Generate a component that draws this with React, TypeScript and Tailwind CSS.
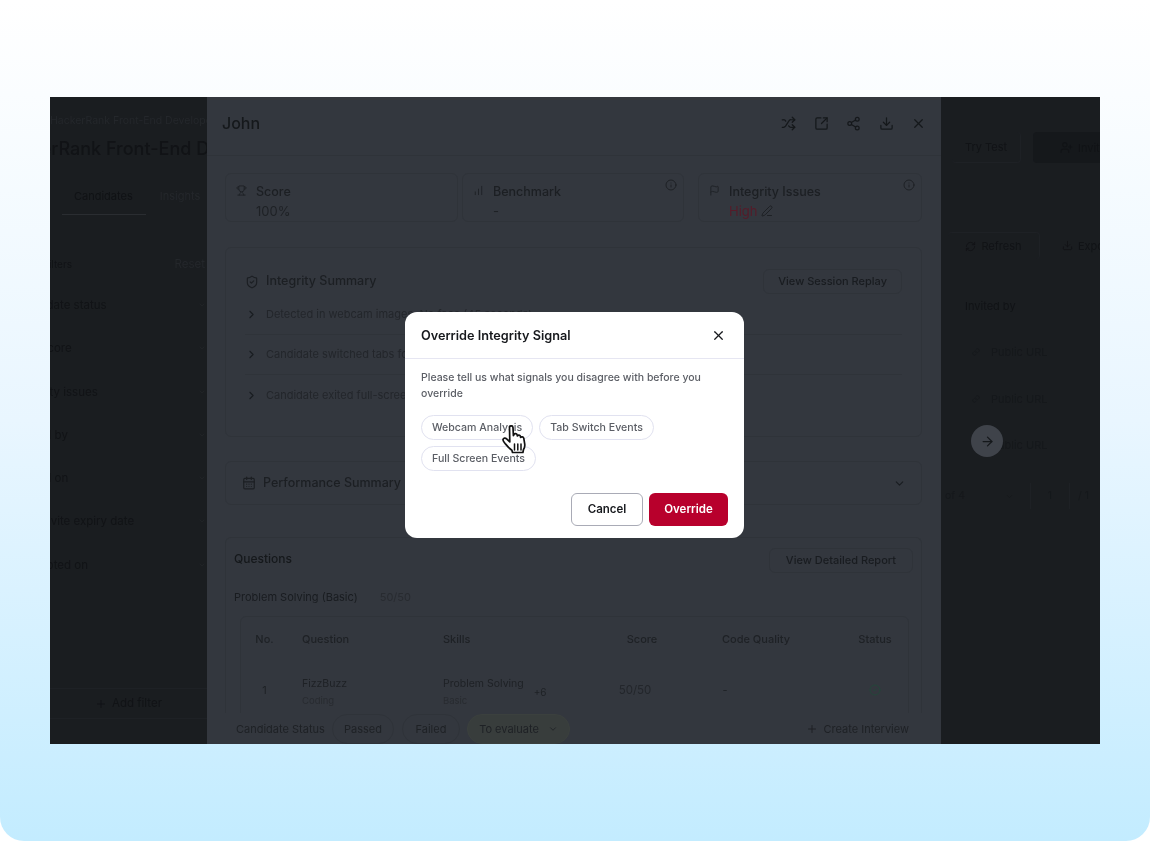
import {
  ArrowRight,
  CalendarDays,
  ChartNoAxesColumnIncreasing,
  ChevronDown,
  ChevronRight,
  CircleCheck,
  Download,
  Flag,
  Info,
  Link,
  PenLine,
  Plus,
  RefreshCw,
  Share2,
  ShieldCheck,
  Shuffle,
  SquareArrowOutUpRight,
  Trophy,
  UserPlus,
  X,
} from 'lucide-react';

const filters = [
  'Candidate status',
  'Test score',
  'Integrity issues',
  'Invited by',
  'Invited on',
  'Test invite expiry date',
  'Attempted on',
];

const issues = [
  'Detected in webcam images: No face (45 seconds)',
  'Candidate switched tabs for 2 minutes during test',
  'Candidate exited full-screen mode 3 times',
];

const tableCols = 'grid grid-cols-[61px_141px_170px_58px_170px_68px] text-center';

function LeftColumn() {
  return (
    <div className="w-[157px] shrink-0 overflow-hidden flex flex-col bg-[#1a1d20] text-[#111316]">
      <p className="mt-[17px] text-[10.5px] leading-[14px] text-[#24272b] whitespace-nowrap">HackerRank Front-End Developer</p>
      <p className="mt-[6px] -ml-[53px] text-[18px] leading-[30px] font-medium whitespace-nowrap">HackerRank Front-End Developer</p>
      <div className="mt-[23px] flex pl-[24px] gap-[27px] text-[11px] leading-[18px] text-[#101215]">
        <span className="relative whitespace-nowrap">
          Candidates
          <span className="absolute left-[-12px] right-[-13px] top-[27px] h-[1px] bg-[#2a2d31]" />
        </span>
        <span className="text-[#24272b]">Insights</span>
      </div>
      <div className="mt-[50px] flex justify-between pr-[2px] text-[11.5px] leading-[18px]">
        <span className="-ml-[7px] text-[10px]">Filters</span>
        <span className="text-[#24272b]">Reset</span>
      </div>
      <div className="mt-[23px] -ml-[35px] flex flex-col gap-[25.3px] text-[11.5px] leading-[18px] text-[#111316]">
        {filters.map((f) => (
          <div key={f} className="flex justify-between items-center pr-[1px] whitespace-nowrap">
            <span>{f}</span>
            <ChevronDown size={8} className="text-[#24272b]" />
          </div>
        ))}
      </div>
      <div className="mt-auto mb-[25px] border-y border-[#1e2125] h-[31px] flex items-center justify-center gap-[5px] text-[11.5px] text-[#111316]">
        <Plus size={12} />
        <span>Add filter</span>
      </div>
    </div>
  );
}

function RightColumn() {
  return (
    <div className="w-[159px] shrink-0 overflow-hidden flex flex-col bg-[#1a1d20] text-[#111316] text-[11px] leading-[18px]">
      <div className="mt-[35px] flex items-center pl-[11px] w-[220px]">
        <div className="h-[31px] w-[69px] border-b border-r border-[#1e2125] rounded flex items-center justify-center">Try Test</div>
        <div className="ml-[12px] h-[31px] w-[100px] bg-[#15181b] rounded flex items-center justify-center gap-[5px]">
          <UserPlus size={13} />
          Invite
        </div>
      </div>
      <div className="mt-[69px] flex items-center w-[220px] pl-[7px]">
        <div className="h-[27px] w-[92px] border-r border-t border-[#1e2125] rounded flex items-center justify-center gap-[5px]">
          <RefreshCw size={11} />
          Refresh
        </div>
        <div className="ml-[22px] flex items-center gap-[5px]">
          <Download size={11} />
          Export
        </div>
      </div>
      <p className="mt-[38px] pl-[24px]">Invited by</p>
      <div className="mt-[28px] flex flex-col gap-[28.5px] pl-[31px]">
        {[0, 1, 2].map((i) => (
          <div key={i} className="flex items-center gap-[11px] text-[#15181b]">
            <Link size={8} />
            <span>Public URL</span>
          </div>
        ))}
      </div>
      <div className="mt-[29px] flex items-center pl-[4px] text-[10.5px] text-[#15181b] whitespace-nowrap">
        <span>of 4</span>
        <ChevronDown size={9} className="ml-[40px]" />
        <span className="ml-[16px] h-[26px] w-[40px] border-x border-[#1e2125] flex items-center justify-center">1</span>
        <span className="ml-[8px]">/ 1</span>
      </div>
    </div>
  );
}

function StatCard({ icon, title, value, info, className }: { icon: React.ReactNode; title: string; value: React.ReactNode; info?: boolean; className: string }) {
  return (
    <div className={`relative h-[49px] border border-[#2f3339] rounded-md flex gap-[9px] pt-[8px] ${className}`}>
      <span className="pt-[3px] text-[#1e2125]">{icon}</span>
      <div>
        <p className="text-[12.5px] leading-[19px] font-medium text-[#1c1f23]">{title}</p>
        <div className="text-[13px] leading-[20px] text-[#1e2125]">{value}</div>
      </div>
      {info && <Info size={12} className="absolute right-[6px] top-[5px] text-[#1e2125]" />}
    </div>
  );
}

function DetailPanel() {
  return (
    <div className="w-[734px] shrink-0 flex flex-col bg-[#33373e] overflow-hidden">
      <div className="h-[59px] shrink-0 flex items-center justify-between pl-[15px] pr-[15px] pb-[6px] border-b border-[#2f3339]">
        <span className="text-[16px] font-medium text-[#15181b]">John</span>
        <div className="flex items-center gap-[17.5px] text-[#15181b]">
          <Shuffle size={15} />
          <SquareArrowOutUpRight size={15} />
          <Share2 size={15} />
          <Download size={15} />
          <X size={15} />
        </div>
      </div>

      <div className="flex-1 min-h-0 overflow-hidden px-[18px]">
        <div className="mt-[17px] flex gap-[4px]">
          <StatCard className="w-[233px] pl-[10px]" icon={<Trophy size={11} />} title="Score" value="100%" />
          <StatCard className="w-[222px] pl-[10px]" icon={<ChartNoAxesColumnIncreasing size={11} />} title="Benchmark" value="-" info />
          <StatCard
            className="ml-[10px] w-[224px] pl-[10px]"
            icon={<Flag size={11} />}
            title="Integrity Issues"
            value={
              <span className="flex items-center gap-[4px] text-[#561b29]">
                High <PenLine size={12} className="text-[#1e2125]" />
              </span>
            }
            info
          />
        </div>

        <div className="mt-[25px] h-[190px] w-[697px] border border-[#2f3339] rounded-md pl-[19px] pr-[19px]">
          <div className="mt-[21px] flex items-center justify-between">
            <div className="flex items-center gap-[7px] text-[#1c1f23]">
              <ShieldCheck size={14} />
              <span className="text-[12.5px] font-medium">Integrity Summary</span>
            </div>
            <span className="h-[25px] px-[14px] flex items-center border border-[#2f3339] rounded-md text-[11px] font-medium text-[#191c20]">View Session Replay</span>
          </div>
          <div className="mt-[1px] flex flex-col">
            {issues.map((t) => (
              <div key={t} className="h-[40px] flex items-center gap-[8px] text-[11px] text-[#23262b] border-b border-[#2f3339] last:border-0 whitespace-nowrap">
                <ChevronRight size={13} className="text-[#191c20]" />
                {t}
              </div>
            ))}
          </div>
        </div>

        <div className="mt-[24px] h-[44px] w-[697px] border border-[#2f3339] rounded-md flex items-center justify-between pl-[16px] pr-[15px]">
          <div className="flex items-center gap-[7px] text-[#1c1f23]">
            <CalendarDays size={14} />
            <span className="text-[12.5px] font-medium">Performance Summary</span>
          </div>
          <ChevronDown size={13} className="text-[#191c20]" />
        </div>

        <div className="mt-[32px] w-[697px] border-x border-t border-[#2f3339] rounded-t-md px-[8px] h-[200px]">
          <div className="mt-[7px] flex items-center justify-between">
            <span className="text-[12px] font-medium text-[#15181b]">Questions</span>
            <span className="mt-[3px] h-[25px] px-[16px] flex items-center border border-[#2f3339] rounded-md text-[11px] font-medium text-[#191c20]">View Detailed Report</span>
          </div>
          <div className="mt-[16px] flex items-center gap-[22px] text-[11px] text-[#191c20]">
            <span>Problem Solving (Basic)</span>
            <span className="text-[#282b30]">50/50</span>
          </div>
          <div className="mt-[10px] ml-[6px] w-[669px] border border-[#2f3339] rounded-t-md text-[11px] leading-[16px] text-[#1e2125]">
            <div className={`${tableCols} h-[44px] items-center font-medium`}>
              <span className="pr-[14px]">No.</span>
              <span className="text-left">Question</span>
              <span className="text-left">Skills</span>
              <span>Score</span>
              <span>Code Quality</span>
              <span>Status</span>
            </div>
            <div className={`${tableCols} items-start pt-[14px] h-[60px]`}>
              <span className="pr-[14px] mt-[7px]">1</span>
              <div className="text-left leading-[17px]">
                <p className="text-[10.5px]">FizzBuzz</p>
                <p className="text-[9.5px] text-[#282b30]">Coding</p>
              </div>
              <div className="text-left flex items-center gap-[10px] leading-[17px]">
                <div>
                  <p className="text-[10.5px]">Problem Solving</p>
                  <p className="text-[9.5px] text-[#282b30]">Basic</p>
                </div>
                <span className="text-[10px] mt-[1px]">+6</span>
              </div>
              <span className="pr-[14px] mt-[7px] text-[11.5px] text-[#23262b]">50/50</span>
              <span className="pr-[62px] mt-[7px]">-</span>
              <CircleCheck size={12} className="justify-self-center mt-[9px] text-[#24463a]" />
            </div>
          </div>
        </div>
      </div>

      <div className="h-[31px] shrink-0 flex items-center pt-[1px] pl-[29px] pr-[32px] text-[11px] text-[#1e2125] bg-[#33373e]">
        <span className="mr-[7px] w-[89px] whitespace-nowrap">Candidate Status</span>
        <span className="h-[30px] w-[62px] flex items-center justify-center rounded-full border border-[#2f3339]">Passed</span>
        <span className="ml-[8px] h-[30px] w-[58px] flex items-center justify-center rounded-full border border-[#2f3339]">Failed</span>
        <span className="ml-[7px] h-[30px] w-[103px] flex items-center justify-center gap-[9px] rounded-full bg-[#383d3c] border border-[#3b403e]">
          To evaluate <ChevronDown size={10} />
        </span>
        <span className="ml-auto flex items-center gap-[6px]">
          <Plus size={12} /> Create Interview
        </span>
      </div>
    </div>
  );
}

function HandCursor({ className }: { className: string }) {
  return (
    <svg className={className} width="28" height="34" viewBox="0 0 28 32" fill="none">
      <path
        d="M8.5 3.5c0-2.2 3.4-2.2 3.5 0l.4 8.2.6-1.2c.6-1.4 3-1.2 3.2.5l.1 1c.7-1.3 3-1.1 3.2.5l.1 1c.8-1 2.9-.8 3.2.8l.9 5.6c.4 2.6-.3 4.3-1.2 5.6l-.6 3H11.5l-.6-2.2C9 25 6.6 22.6 4.2 19.6 3 18 1.7 16.8 2 15.5c.4-1.6 2.4-1.8 3.6-.7l3.2 3.1-.3-14.4Z"
        fill="#fff"
        stroke="#111"
        strokeWidth="1.7"
        strokeLinejoin="round"
      />
      <path d="M13.5 20v6M16.8 20v6M20 20v6" stroke="#111" strokeWidth="1.5" strokeLinecap="round" />
    </svg>
  );
}

function Chip({ label }: { label: string }) {
  return (
    <span className="h-[25px] px-[10px] flex items-center rounded-full border border-[#e1e2f0] text-[10.6px] font-medium text-[#5b5e65] whitespace-nowrap">{label}</span>
  );
}

function OverrideModal() {
  return (
    <div className="absolute left-[355px] top-[215px] w-[339px] h-[226px] bg-white rounded-[12px] flex flex-col">
      <div className="h-[47px] shrink-0 flex items-center justify-between pl-[16px] pr-[18px] pt-[1px] border-b border-[#e6e6f2]">
        <span className="text-[12.7px] font-semibold text-[#17191d]">Override Integrity Signal</span>
        <X size={15} strokeWidth={2} className="text-[#17191d]" />
      </div>
      <div className="px-[16px] pt-[11px]">
        <p className="text-[10.5px] leading-[16px] font-medium text-[#5b5e65] w-[300px]">Please tell us what signals you disagree with before you override</p>
        <div className="relative mt-[13px] flex flex-wrap gap-x-[6px] gap-y-[6px] w-[250px]">
          <Chip label="Webcam Analysis" />
          <Chip label="Tab Switch Events" />
          <Chip label="Full Screen Events" />
          <HandCursor className="absolute left-[80px] top-[8px]" />
        </div>
        <div className="mt-[22px] flex justify-end gap-[6px]">
          <span className="h-[33px] w-[72px] flex items-center justify-center rounded-md border-[1.5px] border-[#a9abb6] text-[11.5px] font-semibold text-[#17191d]">Cancel</span>
          <span className="h-[33px] w-[79px] flex items-center justify-center rounded-md bg-[#b8002c] text-[11.5px] font-semibold text-white">Override</span>
        </div>
      </div>
    </div>
  );
}

export default function App() {
  return (
    <div className="w-[1150px] h-[841px] bg-white font-['Inter',sans-serif]">
      <div className="h-full rounded-b-[24px] bg-linear-to-b from-white via-[#e9f6ff] via-50% to-[#c3ecff] pt-[97px] px-[50px]">
        <div className="relative h-[647px] w-[1050px] flex overflow-hidden blur-[0.4px]">
          <LeftColumn />
          <DetailPanel />
          <RightColumn />
          <span className="absolute left-[921px] top-[328px] w-[32px] h-[32px] rounded-full bg-[#3f434a] flex items-center justify-center text-[#15181b]">
            <ArrowRight size={15} />
          </span>
          <OverrideModal />
        </div>
      </div>
    </div>
  );
}
